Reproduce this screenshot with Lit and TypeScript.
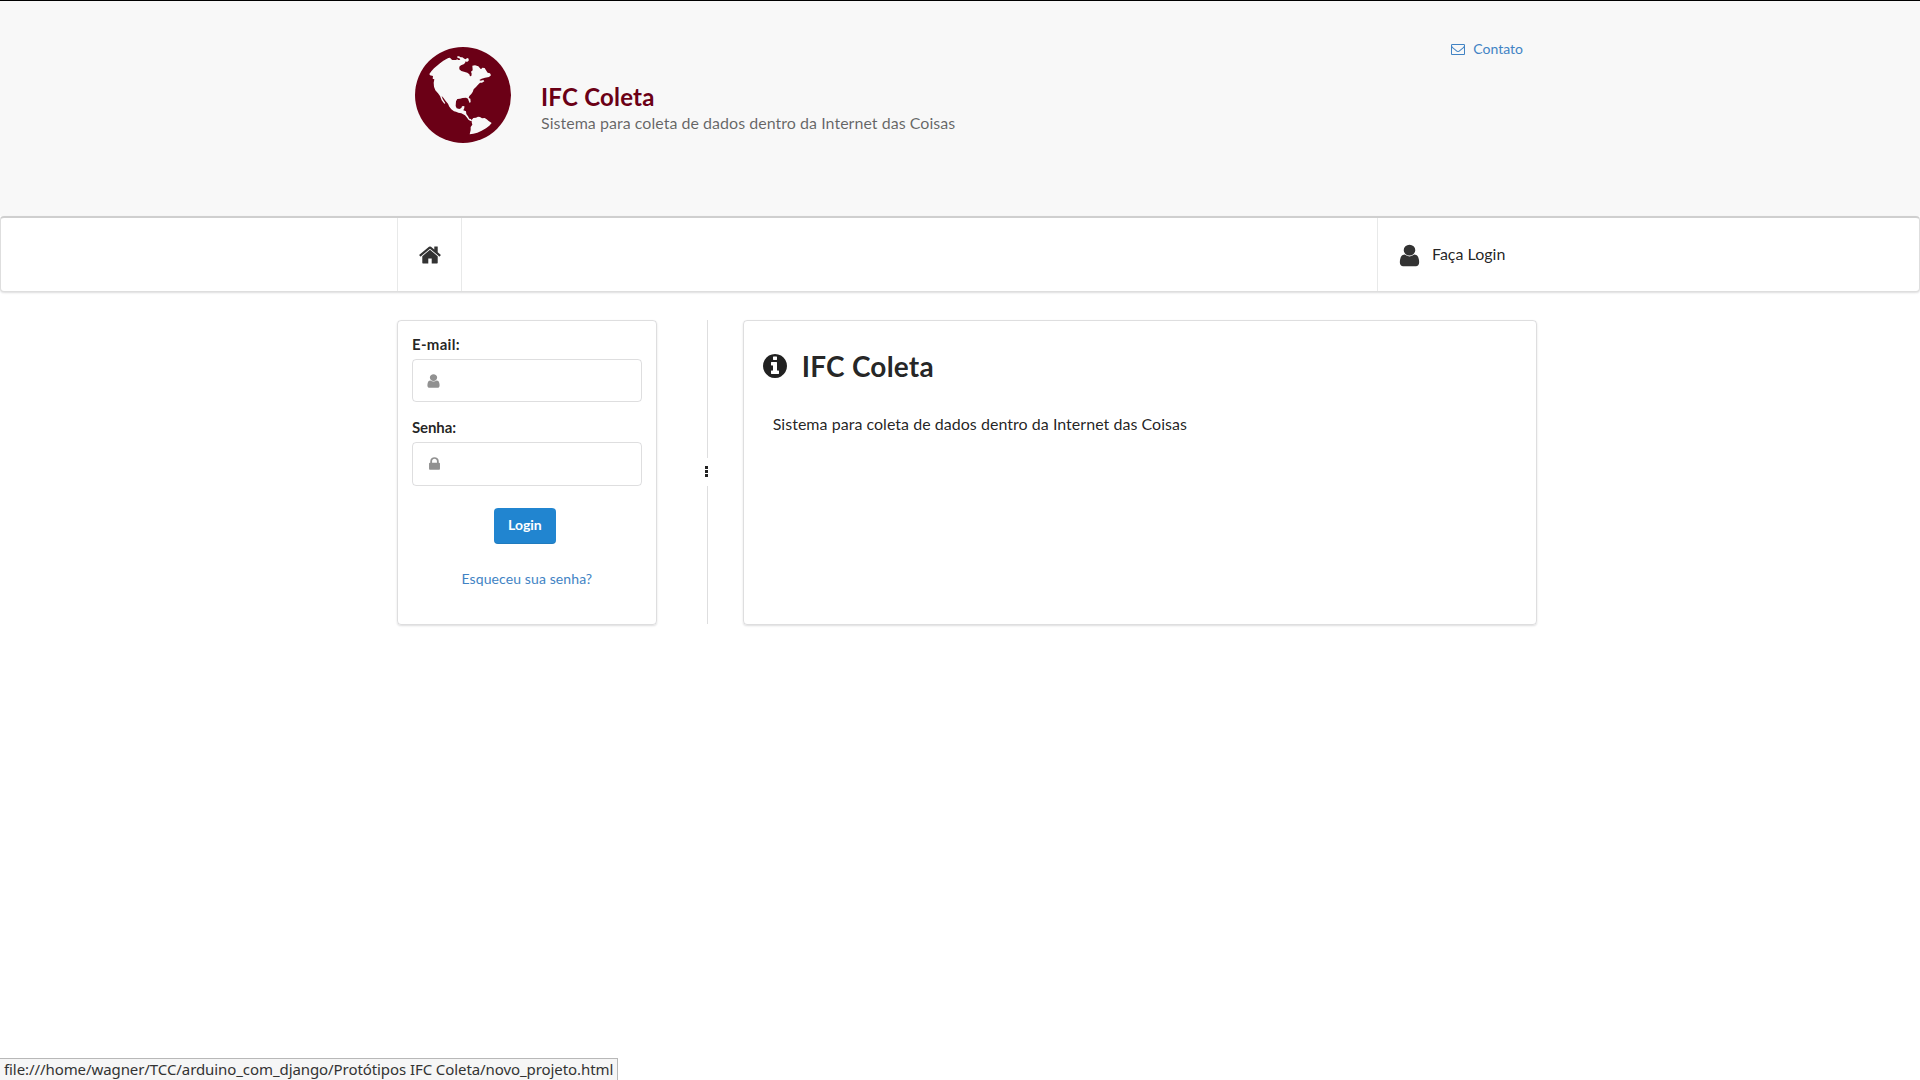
import { LitElement, html, css, svg } from "lit";
import { customElement } from "lit/decorators.js";

const PATHS = {
  user: "M1536 1399q0 109-62.5 187t-150.5 78h-854q-88 0-150.5-78t-62.5-187q0-85 8.5-160.5t31.5-152 58.5-131 94-89 134.5-34.5q131 128 313 128t313-128q76 0 134.5 34.5t94 89 58.5 131 31.5 152 8.5 160.5zm-256-887q0 159-112.5 271.5t-271.5 112.5-271.5-112.5-112.5-271.5 112.5-271.5 271.5-112.5 271.5 112.5 112.5 271.5z",
  home: "M1472 992v480q0 26-19 45t-45 19h-384v-384h-256v384h-384q-26 0-45-19t-19-45v-480q0-1 .5-3t.5-3l575-474 575 474q1 2 1 6zm223-69l-62 74q-8 9-21 11h-3q-13 0-21-7l-692-577-692 577q-12 8-24 7-13-2-21-11l-62-74q-8-10-7-23.5t11-21.5l719-599q32-26 76-26t76 26l244 204v-195q0-14 9-23t23-9h192q14 0 23 9t9 23v408l219 182q10 8 11 21.5t-7 23.5z",
  lock: "M640 768h512v-192q0-106-75-181t-181-75-181 75-75 181v192zm832 96v576q0 40-28 68t-68 28h-960q-40 0-68-28t-28-68v-576q0-40 28-68t68-28h32v-192q0-184 132-316t316-132 316 132 132 316v192h32q40 0 68 28t28 68z",
  info: "M1152 1376v-160q0-14-9-23t-23-9h-96v-512q0-14-9-23t-23-9h-320q-14 0-23 9t-9 23v160q0 14 9 23t23 9h96v320h-96q-14 0-23 9t-9 23v160q0 14 9 23t23 9h448q14 0 23-9t9-23zm-128-896v-160q0-14-9-23t-23-9h-192q-14 0-23 9t-9 23v160q0 14 9 23t23 9h192q14 0 23-9t9-23zm640 416q0 209-103 385.5t-279.5 279.5-385.5 103-385.5-103-279.5-279.5-103-385.5 103-385.5 279.5-279.5 385.5-103 385.5 103 279.5 279.5 103 385.5z",
  mail: "M1664 1504v-768q-32 36-69 66-268 206-426 338-51 43-83 67t-86.5 48.5-102.5 24.5h-2q-48 0-102.5-24.5t-86.5-48.5-83-67q-158-132-426-338-37-30-69-66v768q0 13 9.5 22.5t22.5 9.5h1472q13 0 22.5-9.5t9.5-22.5zm0-1051v-24.5l-.5-13-3-12.5-5.5-9-9-7.5-14-2.5h-1472q-13 0-22.5 9.5t-9.5 22.5q0 168 147 284 193 152 401 317 6 5 35 29.5t46 37.5 44.5 31.5 50.5 27.5 43 9h2q20 0 43-9t50.5-27.5 44.5-31.5 46-37.5 35-29.5q208-165 401-317 54-43 100.5-115.5t46.5-131.5zm128-37v1088q0 66-47 113t-113 47h-1472q-66 0-113-47t-47-113v-1088q0-66 47-113t113-47h1472q66 0 113 47t47 113z",
};

const icon = (name: keyof typeof PATHS, cls: string) =>
  html`<svg class="icon ${cls}" viewBox="0 0 1792 1792" preserveAspectRatio="none" aria-hidden="true">${svg`<path d=${PATHS[name]}></path>`}</svg>`;

const globe = html`<svg class="globe" viewBox="75 51 288 288" aria-hidden="true">
  <circle cx="219" cy="195" r="144" fill="#6b0016"></circle>
  <path fill="#f8f8f8" d="M118 132L124 124 132 115 141 107 150 100 160 92 168 88 175 84 180 83 184 88 187 90 199 90 201 87 204 90 209 90 211 87 207 85 202 83 202 79 207 79 212 82 217 82 221 85 226 88 232 84 236 86 236 92 231 96 227 94 225 99 221 103 213 106 208 110 208 118 214 123 222 125 232 128 238 133 240 139 244 138 245 131 243 125 248 121 247 107 255 106 265 109 270 115 273 118 277 113 284 114 288 121 293 128 300 130 303 136 297 141 285 143 275 146 268 150 272 152 280 150 283 154 276 158 270 158 264 164 258 171 251 178 248 186 244 192 238 198 236 204 241 206 242 216 239 219 236 212 234 206 228 203 218 204 210 206 202 207 198 214 197 228 200 235 208 237 214 234 216 229 223 228 223 234 220 241 228 244 229 252 234 259 238 266 243 267 245 272 242 273 236 270 230 262 225 256 214 250 205 248 198 245 192 244 184 238 178 230 174 221 167 213 160 203 155 198 158 207 166 220 163 221 155 211 150 198 144 190 136 181 132 170 131 158 133 148 128 146 129 138 120 136ZM245 270L250 264 258 263 264 260 270 261 276 265 284 264 290 268 296 273 305 279 298 287 288 295 275 302 262 308 250 311 239 313 242 300 242 291 247 284 245 276Z"></path>
</svg>`;

@customElement("app-root")
export class AppRoot extends LitElement {
  static styles = css`
    :host { display: flex; flex-direction: column; position: relative; height: 1080px; overflow: hidden; background: #fff; color: rgba(0,0,0,.87); font: 14px/20px Lato, "Liberation Sans", sans-serif; box-sizing: border-box; }
    *, *::before, *::after { box-sizing: border-box; }
    .icon { display: block; flex: none; fill: currentColor; }
    a { color: #4183c4; text-decoration: none; }
    .wrap { width: 1140px; margin-left: 397px; display: flex; }
    .top { height: 216px; flex: none; background: #f8f8f8; border-top: 1px solid #000; }
    .brand { display: flex; padding: 46px 0 0 18px; }
    .globe { display: block; width: 96px; height: 96px; }
    .titles { padding: 34px 0 0 30px; }
    h1 { margin: 0 0 1px; font-size: 24px; line-height: 31px; font-weight: 700; letter-spacing: .22px; color: #6b0016; }
    .sub { font-size: 16px; line-height: 20px; letter-spacing: .03px; color: rgba(0,0,0,.6); }
    .contact { margin-left: auto; height: 20px; margin-top: 38px; padding-right: 14px; display: flex; align-items: center; gap: 8px; }
    .i-mail { width: 14px; height: 14px; }
    nav { flex: none; height: 76px; border: 1px solid rgba(34,36,38,.15); border-top: 2px solid #cfcfcf; border-radius: 4px; box-shadow: 0 1px 2px rgba(34,36,38,.15); }
    nav .wrap { height: 100%; margin-left: 396px; }
    .home { width: 65px; padding-top: 1px; border: solid rgba(34,36,38,.1); border-width: 0 1px; display: flex; align-items: center; justify-content: center; color: #333; }
    .i-home { width: 24px; height: 24px; }
    .login-item { margin-left: auto; width: 160px; border-left: 1px solid rgba(34,36,38,.1); display: flex; align-items: center; padding-left: 18px; gap: 9px; font-size: 16px; }
    .login-item span { padding-bottom: 2px; }
    .i-user { width: 27px; height: 25px; margin-top: 2px; color: #333; }
    .body { padding-top: 28px; }
    .card { height: 305px; border: 1px solid rgba(34,36,38,.15); border-radius: 4px; box-shadow: 0 1px 2px rgba(34,36,38,.15); }
    .form { width: 260px; padding: 14px; display: flex; flex-direction: column; }
    label { display: block; font-size: 15px; font-weight: 700; line-height: 19px; }
    .email { letter-spacing: .3px; }
    .senha { letter-spacing: -.1px; }
    .input { height: 43px; margin: 5px 0 16px; border: 1px solid rgba(34,36,38,.15); border-radius: 4px; display: flex; align-items: center; padding-left: 12px; color: #919191; }
    .second { height: 44px; margin-bottom: 22px; padding-left: 13px; }
    .i-field { width: 17px; height: 16px; }
    button { align-self: center; width: 62px; height: 36px; margin: 0 4px 0 0; padding: 0 0 2px; border: 0; border-radius: 4px; background: #2185d0; color: #fff; font: 700 14px/14px Lato, "Liberation Sans", sans-serif; box-shadow: inset 0 -1px rgba(34,36,38,.1); }
    .forgot { align-self: center; margin-top: 25px; letter-spacing: .1px; }
    .divider { width: 86px; height: 304px; display: flex; flex-direction: column; align-items: center; }
    .line { width: 1px; height: 138px; margin-left: 15px; background: rgba(34,36,38,.15); }
    .dots { height: 28px; display: flex; flex-direction: column; gap: 1px; margin-left: 13px; padding-top: 8px; }
    .dot { width: 3px; height: 3px; background: #222; }
    .main { width: 795px; padding: 27px 19px; }
    h2 { display: flex; align-items: center; gap: 13px; margin: 0; font-size: 28px; line-height: 36px; font-weight: 700; letter-spacing: .22px; }
    .i-info { width: 28px; height: 28px; margin-left: -2px; }
    p { margin: 30px 0 0 10px; font-size: 16px; line-height: 20px; letter-spacing: .03px; }
    .status { position: absolute; left: 0; bottom: 0; height: 22px; width: 618px; background: #f6f6f6; border: solid #b8b8b8; border-width: 1px 1px 0 0; padding-left: 4px; color: #333; font: 15px/20px "Noto Sans", sans-serif; letter-spacing: -.08px; white-space: nowrap; }
  `;

  render() {
    return html`
      <header class="top">
        <div class="wrap">
          <div class="brand">
            ${globe}
            <div class="titles">
              <h1>IFC Coleta</h1>
              <div class="sub">Sistema para coleta de dados dentro da Internet das Coisas</div>
            </div>
          </div>
          <a class="contact">${icon("mail", "i-mail")}<span>Contato</span></a>
        </div>
      </header>
      <nav>
        <div class="wrap">
          <div class="home">${icon("home", "i-home")}</div>
          <div class="login-item">${icon("user", "i-user")}<span>Faça Login</span></div>
        </div>
      </nav>
      <div class="wrap body">
        <section class="card form">
          <label class="email">E-mail:</label>
          <div class="input">${icon("user", "i-field")}</div>
          <label class="senha">Senha:</label>
          <div class="input second">${icon("lock", "i-field")}</div>
          <button>Login</button>
          <a class="forgot">Esqueceu sua senha?</a>
        </section>
        <div class="divider">
          <div class="line"></div>
          <div class="dots"><span class="dot"></span><span class="dot"></span><span class="dot"></span></div>
          <div class="line"></div>
        </div>
        <section class="card main">
          <h2>${icon("info", "i-info")}<span>IFC Coleta</span></h2>
          <p>Sistema para coleta de dados dentro da Internet das Coisas</p>
        </section>
      </div>
      <div class="status">file:///home/wagner/TCC/arduino_com_django/Protótipos IFC Coleta/novo_projeto.html</div>
    `;
  }
}
